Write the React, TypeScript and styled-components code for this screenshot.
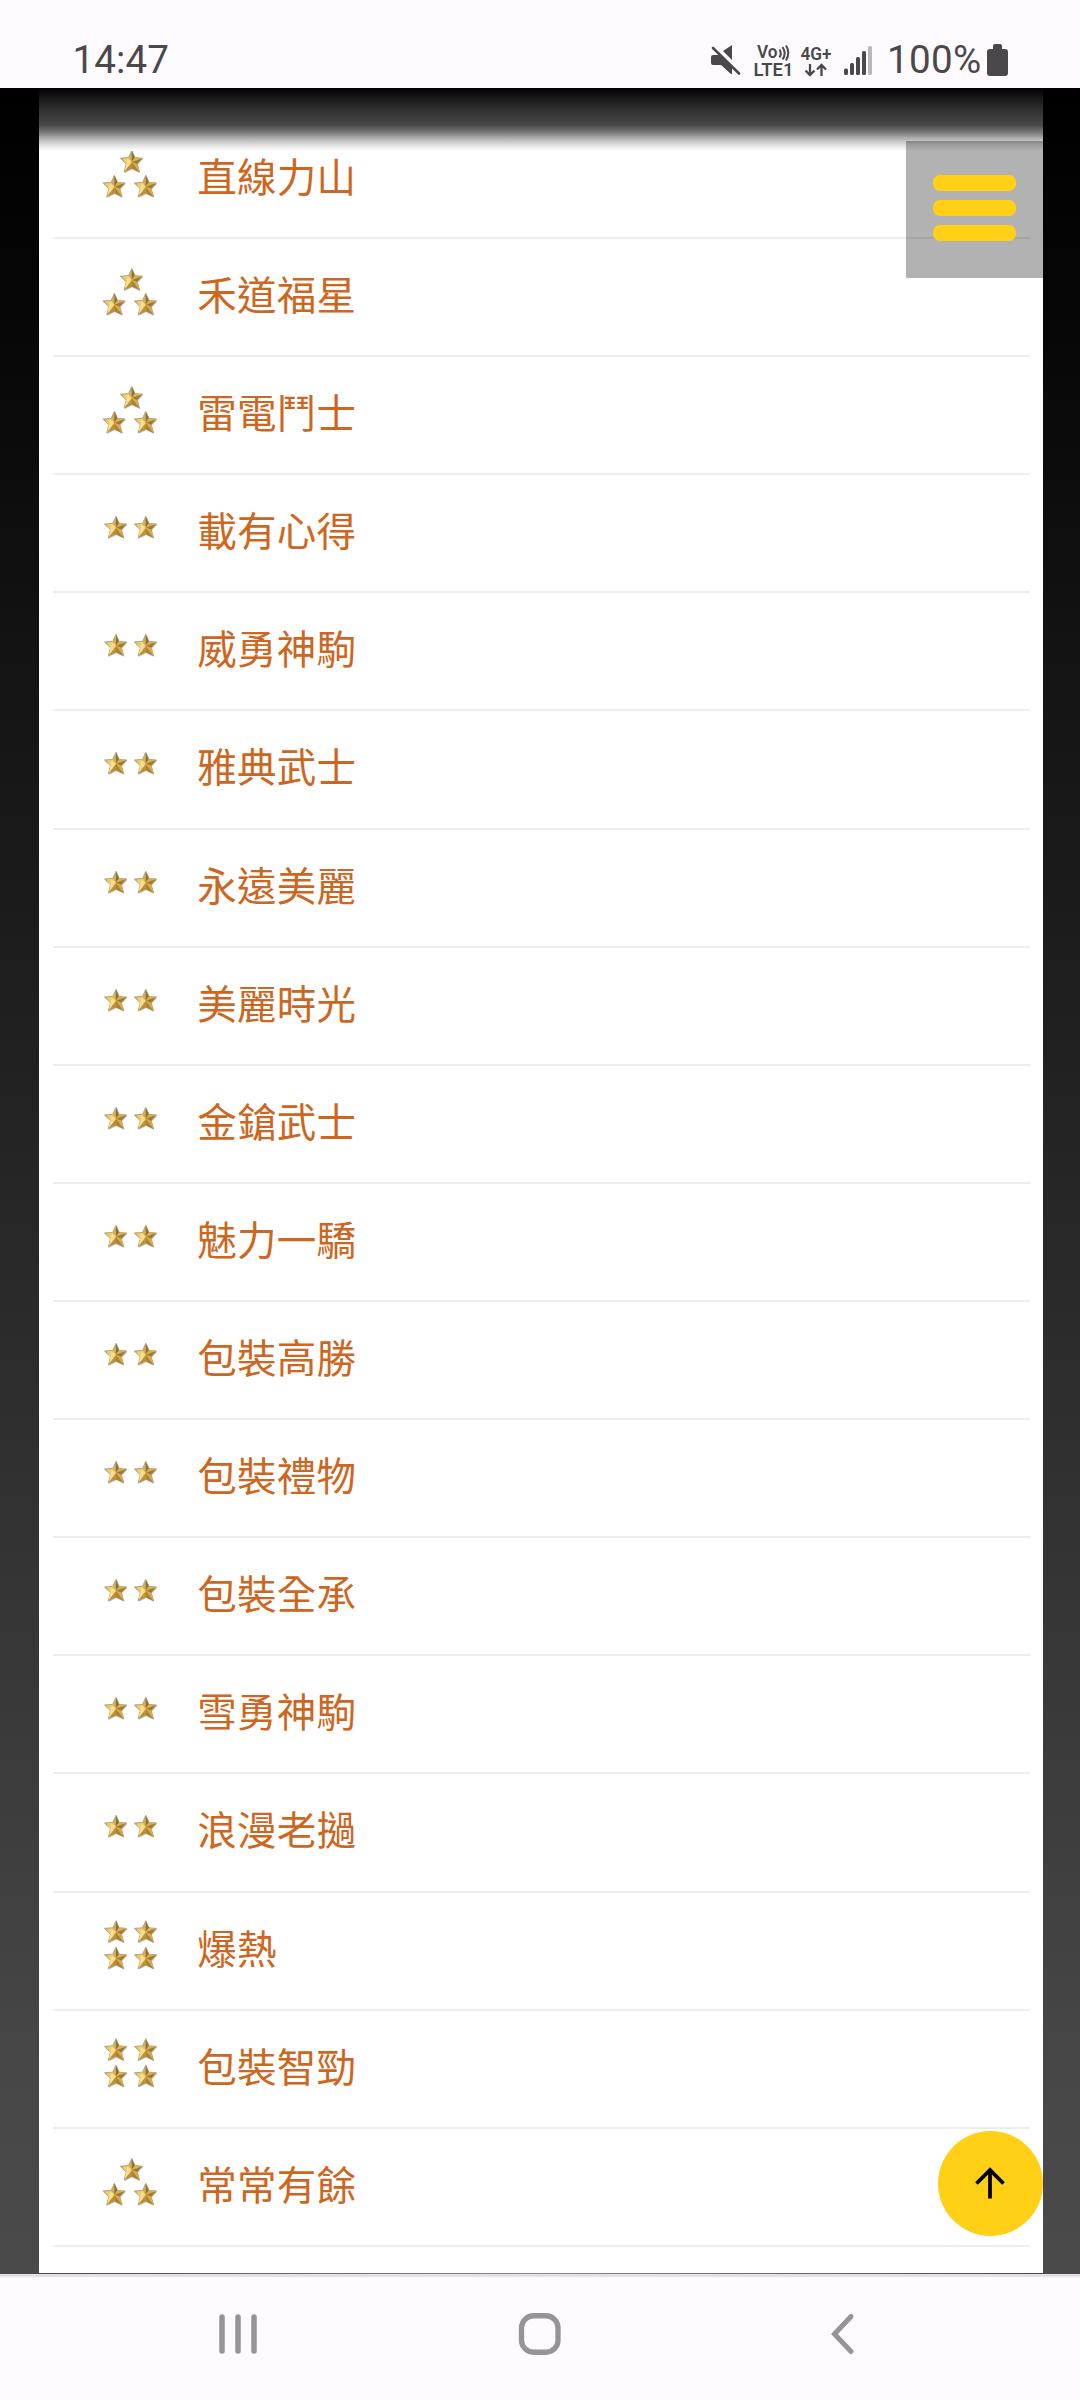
import React from "react";
import styled, { createGlobalStyle } from "styled-components";

const Global = createGlobalStyle`
  * { box-sizing: border-box; }
  body { margin: 0; background: #fefbff; }
`;

const Screen = styled.div`
  width: 1080px;
  height: 2400px;
  display: flex;
  flex-direction: column;
  overflow: hidden;
  font-family: Roboto, "Noto Sans CJK TC", sans-serif;
`;

const StatusBar = styled.header`
  height: 88px;
  flex: none;
  display: flex;
  align-items: flex-start;
  justify-content: space-between;
  padding: 37px 71px 0 72.5px;
  background: #fefbff;
  color: #4a484b;
`;

const Clock = styled.time`
  font-size: 38.6px;
  line-height: 46px;
  letter-spacing: 0.1px;
`;

const StatusIcons = styled.div`
  display: flex;
  align-items: flex-start;
`;

const StatusGlyphs = styled.svg`
  display: block;
  width: 175px;
  height: 46px;
  font-family: Roboto, sans-serif;
  font-weight: 600;
`;

const BatteryText = styled.span`
  width: 103px;
  padding-left: 4px;
  font-size: 38.6px;
  line-height: 46px;
  letter-spacing: 0.3px;
  white-space: nowrap;
`;

const Battery = styled.svg`
  display: block;
  width: 23px;
  height: 46px;
`;

const Page = styled.main`
  position: relative;
  height: 2186px;
  flex: none;
  padding: 0 37px 0 39px;
  background: linear-gradient(#000 0%, #060606 10%, #151515 28%, #1b1b1b 37%, #292929 54%, #484848 92%, #4a4a4a 100%);
`;

const Sheet = styled.section`
  height: 2185px;
  padding: 32.9px 13px 0 14px;
  background: #fff;
  overflow: hidden;
`;

const SheetEdge = styled.div`
  height: 1px;
  background: linear-gradient(90deg, #4a464b, #8c8a8c 50%, #4a464b);
`;

const TopShade = styled.div`
  position: absolute;
  top: 0;
  left: 39px;
  right: 37px;
  height: 63px;
  background: linear-gradient(#000 0, #161616 9px, #303030 22px, #484848 37px, #777 44px, #b4b4b4 51px, #e0e0e0 57px, #fff 63px);
`;

const List = styled.ul`
  margin: 0;
  padding: 0;
  list-style: none;
`;

const Row = styled.li`
  height: 118.12px;
  display: flex;
  align-items: flex-start;
  padding-left: 47px;
  border-bottom: 2px solid #ededed;
`;

const Stars = styled.svg`
  display: block;
  width: 60px;
  height: 64px;
  margin-top: 24px;
  flex: none;
`;

const Name = styled.a`
  margin-left: 37.3px;
  color: #cd6620;
  font-family: "Noto Sans CJK TC", sans-serif;
  font-size: 39.5px;
  letter-spacing: 0.2px;
  line-height: 58px;
  margin-top: 25px;
`;

const MenuButton = styled.button`
  position: absolute;
  top: 53px;
  right: 37px;
  width: 137px;
  height: 137px;
  display: flex;
  flex-direction: column;
  align-items: center;
  gap: 9.3px;
  padding: 33.7px 0 0;
  border: 0;
  background: rgba(0, 0, 0, 0.3);
`;

const MenuBar = styled.span`
  width: 83px;
  height: 16px;
  border-radius: 7px;
  background: #ffd016;
`;

const TopButton = styled.button`
  position: absolute;
  right: 37px;
  bottom: 38px;
  width: 105px;
  height: 105px;
  display: flex;
  align-items: center;
  justify-content: center;
  padding: 0 1px 2px 0;
  border: 0;
  border-radius: 50%;
  background: #ffd016;
`;

const NavBar = styled.nav`
  flex: 1;
  display: flex;
  align-items: flex-start;
  justify-content: center;
  gap: 241px;
  padding-top: 34px;
  border-top: 3px solid #e3e0e8;
  background: #fefbff;
`;

const NavIcon = styled.svg`
  display: block;
  width: 61px;
  height: 46px;
`;

const STAR = "M0.5 -11.5 L3.5 -4.4 L11.3 -3.8 L5.8 2 L8.2 10.2 L0.5 6.4 L-7.200 10.2 L-5 2 L-11 -3.8 L-2.800 -4.4 Z";

const layouts: Record<number, [number, number][]> = {
  2: [[15.5, 28.8], [45.3, 28.8]],
  3: [[31.3, 17], [13.9, 41.8], [45.3, 41.8]],
  4: [[15.5, 15.2], [45.3, 15.2], [15.5, 41.6], [45.3, 41.6]],
};

function StarGroup({ count }: { count: number }) {
  return (
    <Stars viewBox="0 0 60 64" aria-hidden="true">
      {layouts[count].map(([x, y], i) => (
        <g key={i} transform={`translate(${x} ${y})`}>
          <path d={STAR} transform="translate(.8 .8)" fill="#77716a" opacity=".35" />
          <path d={STAR} fill="url(#gold)" stroke="#b3a888" strokeWidth="1" strokeLinejoin="round" />
          <path d="M0.3 -9 L0.4 0 L-2.800 -4Z" fill="#cdae62" />
          <path d="M-9 -3.2 L-2.800 -4 L0.4 0 L-5 2Z" fill="#edcd72" />
          <path d="M0.5 -11 L3.5 -4.4 L0.4 0Z" fill="#8f6e30" />
          <path d="M3.5 -4.4 L10.5 -3.6 L.4 0Z" fill="#d9b052" />
          <path d="M10.5 -3.5 L5.8 2 L.4 0Z" fill="#a07a34" />
          <path d="M5.8 2 L7.8 9.7 L.4 0Z" fill="#dbab45" />
          <path d="M.5 6.400 L7.500 9.600 L.4 0Z" fill="#ab8236" />
          <path d="M-6.800 9.7 L.4 0 L.5 6.400Z" fill="#b89140" />
          <path d="M-6.500 9 L-5 2 L.4 0Z M-4 -3 L.2 -.2 L-4.600 1.800Z" fill="#ffe088" />
        </g>
      ))}
    </Stars>
  );
}

const entries: [string, number][] = [
  ["直線力山", 3],
  ["禾道福星", 3],
  ["雷電鬥士", 3],
  ["載有心得", 2],
  ["威勇神駒", 2],
  ["雅典武士", 2],
  ["永遠美麗", 2],
  ["美麗時光", 2],
  ["金鎗武士", 2],
  ["魅力一驕", 2],
  ["包裝高勝", 2],
  ["包裝禮物", 2],
  ["包裝全承", 2],
  ["雪勇神駒", 2],
  ["浪漫老撾", 2],
  ["爆熱", 4],
  ["包裝智勁", 4],
  ["常常有餘", 3],
];

const GradientDefs = styled.svg`
  display: block;
  width: 0;
  height: 0;
`;

export default function App() {
  return (
    <Screen>
      <Global />
      <StatusBar>
        <Clock>14:47</Clock>
        <StatusIcons>
          <StatusGlyphs viewBox="708 37 175 46" fill="#4a484b">
            <path d="M711 57q0-2 2-2h5l1-1 13 13v7h-1l-10-9h-8q-2 0-2-2zM723 51l9-6v15z" />
            <path d="M713 48l26 25.500" stroke="#4a484b" strokeWidth="2.600" strokeLinecap="round" />
            <text x="757" y="58" fontSize="18" textLength="20.500" lengthAdjust="spacingAndGlyphs">Vo</text>
            <path d="M779.500 49.500q2.500 4 0 8M782.500 47q4.500 6.500 0 12.500M786 45.500q4.500 7 0 15" fill="none" stroke="#4a484b" strokeWidth="2" />
            <text x="753.500" y="76" fontSize="18.500" textLength="40" lengthAdjust="spacingAndGlyphs">LTE1</text>
            <text x="800.500" y="59.500" fontSize="17.500" textLength="31" lengthAdjust="spacingAndGlyphs">4G+</text>
            <path d="M810 64v11m-4.500-4.500l4.500 4.500 4.500-4.500M821.500 76v-11m-4.500 4.500l4.500-4.500 4.500 4.500" fill="none" stroke="#4a484b" strokeWidth="2.300" />
            <rect x="844" y="68.500" width="4" height="6.500" rx="1.500" />
            <rect x="850" y="63" width="4" height="12" rx="1.500" />
            <rect x="856" y="57" width="4" height="18" rx="1.500" />
            <rect x="862" y="51" width="4" height="24" rx="1.500" />
            <rect x="868" y="46" width="4" height="29" rx="1.500" fill="#b9b7ba" />
          </StatusGlyphs>
          <BatteryText>100%</BatteryText>
          <Battery viewBox="0 0 23 46">
            <path d="M7 9q0-2 2-2h5q2 0 2 2v3h3q3 0 3 3v21q0 3-3 3H4q-3 0-3-3V15q0-3 3-3h3z" fill="#4a484b" />
          </Battery>
        </StatusIcons>
      </StatusBar>
      <Page>
        <GradientDefs>
          <defs>
            <linearGradient id="gold" x1="0" y1="0" x2="1" y2="1">
              <stop offset="0" stopColor="#8f7a3e" />
              <stop offset=".45" stopColor="#f2c85a" />
              <stop offset="1" stopColor="#a9781f" />
            </linearGradient>
          </defs>
        </GradientDefs>
        <Sheet>
          <List>
            {entries.map(([name, count]) => (
              <Row key={name}>
                <StarGroup count={count} />
                <Name>{name}</Name>
              </Row>
            ))}
          </List>
        </Sheet>
        <SheetEdge />
        <TopShade />
        <MenuButton aria-label="menu">
          <MenuBar />
          <MenuBar />
          <MenuBar />
        </MenuButton>
        <TopButton aria-label="top">
          <svg width="32" height="32" viewBox="0 0 32 32" fill="none" stroke="#000" strokeWidth="3.800">
            <path d="M16 31.500V3M2.500 16.500L16 3 29.500 16.500" />
          </svg>
        </TopButton>
      </Page>
      <NavBar>
        <NavIcon viewBox="0 0 61 46" stroke="#969497" strokeWidth="5.500" strokeLinecap="round">
          <path d="M14 6v34M30 6v34M46 6v34" />
        </NavIcon>
        <NavIcon viewBox="0 0 61 46" fill="none" stroke="#969497" strokeWidth="5.300">
          <rect x="11.500" y="4.750" width="36.500" height="36.500" rx="12" />
        </NavIcon>
        <NavIcon viewBox="0 0 61 46" fill="none" stroke="#969497" strokeWidth="5" strokeLinecap="round">
          <path d="M39 5.500L22.500 23l16.500 17.500" />
        </NavIcon>
      </NavBar>
    </Screen>
  );
}
